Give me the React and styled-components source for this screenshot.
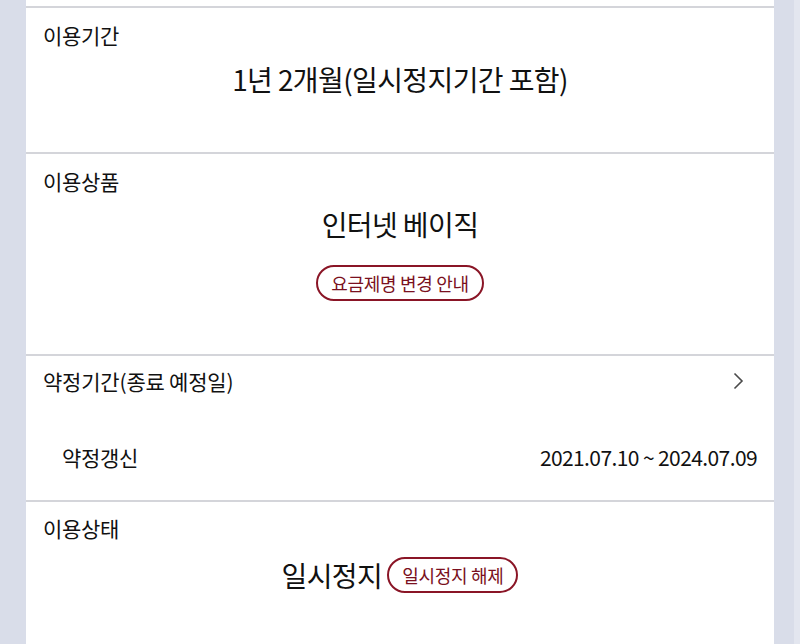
import React from 'react';
import styled, { createGlobalStyle } from 'styled-components';

const GlobalStyle = createGlobalStyle`
  html, body {
    margin: 0;
    padding: 0;
    background: #dadeea;
  }
  body {
    font-family: "Noto Sans CJK KR", "Noto Sans", sans-serif;
    color: #111111;
  }
`

const Page = styled.div`
  width: 800px;
  height: 644px;
  overflow: hidden;
  display: flex;
  background: linear-gradient(to right, #d9dde9 0, #d9dde9 794px, #e3e6ef 794px);
`

const Card = styled.div`
  margin-left: 26px;
  width: 748px;
  background: #ffffff;
  padding-top: 6px;
  display: flex;
  flex-direction: column;
`

const Section = styled.section`
  height: ${p => p.h}px;
  flex-shrink: 0;
  border-top: 2px solid #d4d5da;
  box-sizing: border-box;
  display: flex;
  flex-direction: column;
  padding: 0 17px;
`

const Label = styled.div`
  font-size: 21px;
  line-height: 26px;
  letter-spacing: -0.3px;
  margin-top: ${p => p.mt || 14}px;
`

const Value = styled.div`
  font-size: 28px;
  line-height: 36px;
  letter-spacing: -0.6px;
  text-align: center;
  margin-top: ${p => p.mt || 13}px;
  display: flex;
  justify-content: center;
  align-items: center;
  gap: 5px;
`

const Pill = styled.span`
  display: inline-flex;
  align-items: center;
  justify-content: center;
  height: 36px;
  padding: 0 13px;
  box-sizing: border-box;
  border: 2px solid #8a1526;
  border-radius: 18px;
  color: #7a1020;
  font-size: 18px;
  letter-spacing: -0.3px;
`

const PillRow = styled.div`
  display: flex;
  justify-content: center;
  margin-top: 23px;
`

const HeadRow = styled.div`
  display: flex;
  justify-content: space-between;
  align-items: center;
  margin-top: 12px;
  padding-right: 12px;
  font-size: 21px;
  line-height: 26px;
  letter-spacing: -0.2px;
`

const DetailRow = styled.div`
  display: flex;
  justify-content: space-between;
  align-items: center;
  margin-top: 50px;
  padding: 0 0 0 19px;
  font-size: 21px;
  line-height: 26px;
  letter-spacing: -0.3px;
`

const Date = styled.span`
  letter-spacing: -0.6px;
`

const Chevron = () => (
  <svg width="12" height="18" viewBox="0 0 12 18" fill="none">
    <path d="M1.5 1.5 L9 9 L1.5 16.5" stroke="#4a4a4a" strokeWidth="1.6" />
  </svg>
)

const App = () => (
  <>
    <GlobalStyle />
    <Page>
      <Card>
        <Section h={146}>
          <Label>이용기간</Label>
          <Value>1년 2개월(일시정지기간 포함)</Value>
        </Section>
        <Section h={202}>
          <Label>이용상품</Label>
          <Value mt={12}>인터넷 베이직</Value>
          <PillRow>
            <Pill>요금제명 변경 안내</Pill>
          </PillRow>
        </Section>
        <Section h={146}>
          <HeadRow>
            <span>약정기간(종료 예정일)</span>
            <Chevron />
          </HeadRow>
          <DetailRow>
            <span>약정갱신</span>
            <Date>2021.07.10 ~ 2024.07.09</Date>
          </DetailRow>
        </Section>
        <Section h={150}>
          <Label mt={13}>이용상태</Label>
          <Value mt={16}>
            일시정지
            <Pill>일시정지 해제</Pill>
          </Value>
        </Section>
      </Card>
    </Page>
  </>
)

export default App;
